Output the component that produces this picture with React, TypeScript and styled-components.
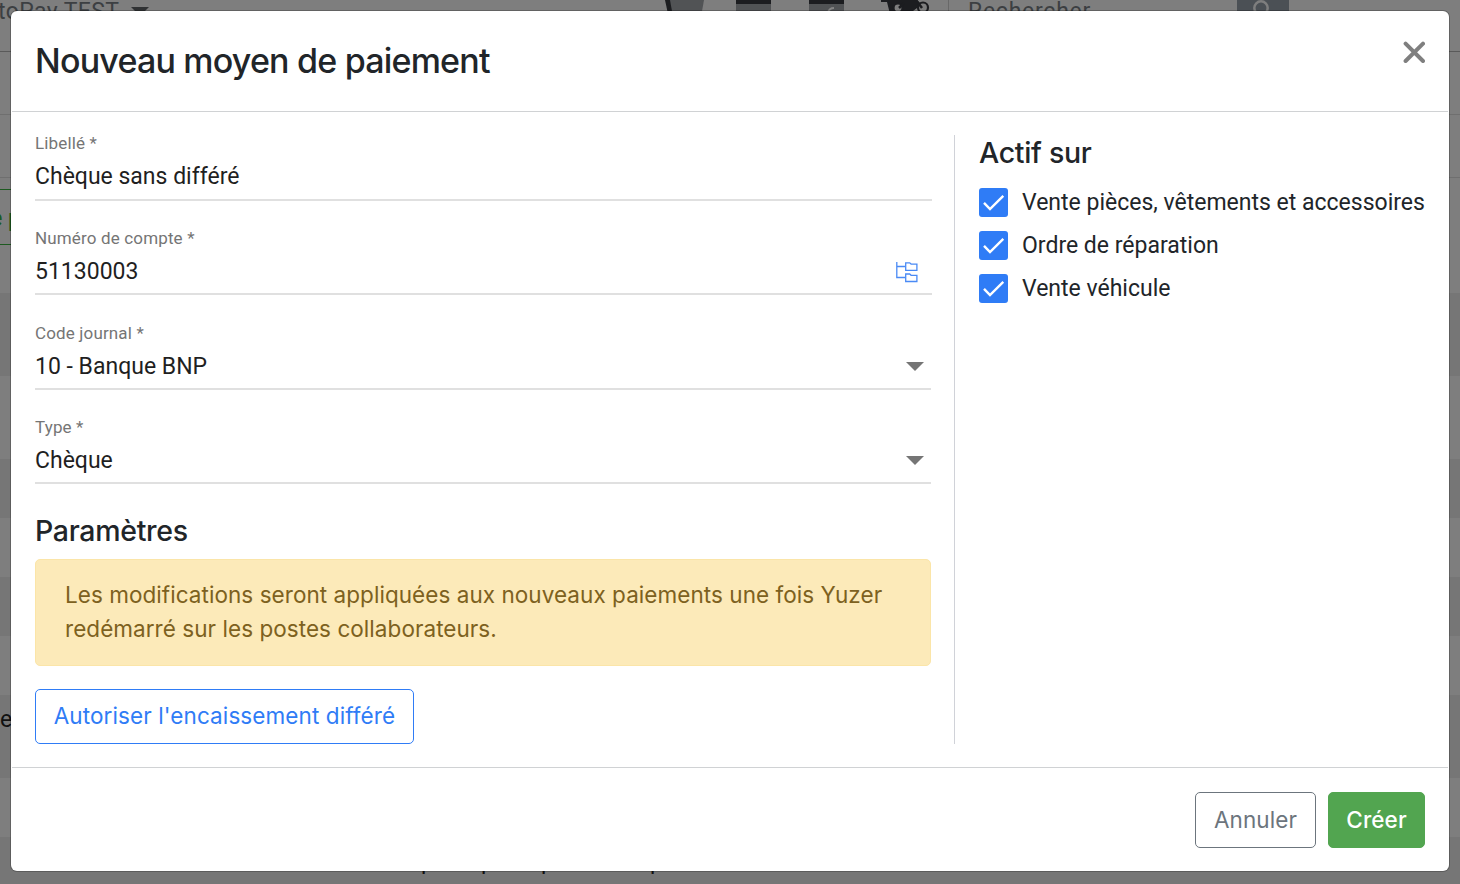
import React from "react";
import styled, { createGlobalStyle } from "styled-components";

const GlobalStyle = createGlobalStyle`
  *, *::before, *::after { box-sizing: border-box; }
  body { margin: 0; overflow: hidden; background: #767676; font-family: Roboto, sans-serif; color: #212529; }
  h2, h3, p { margin: 0; }
  button { font-family: inherit; background: none; margin: 0; cursor: pointer; }
`;

const Page = styled.div`
  position: relative;
  width: 1460px;
  height: 884px;
  overflow: hidden;
`;

/* Dimmed page behind the dialog */
const Backdrop = styled.div`
  display: flex;
  flex-direction: column;
  height: 884px;
  background: #7e7e7e;
`;
const TopBar = styled.div`
  display: flex;
  align-items: flex-start;
  flex: none;
  height: 52px;
  border-bottom: 1px solid #5a5a5a;
  box-shadow: 0 1px 3px rgba(0, 0, 0, 0.25);
  color: #3c3f42;
  font-size: 23px;
  line-height: 24px;
  white-space: nowrap;
`;
const Shop = styled.div`
  display: flex;
  width: 660px;
  margin-left: -2px;
  gap: 12px;
  letter-spacing: 0.4px;
`;
const Caret = styled.span<{ $top?: number; $color?: string }>`
  width: 0;
  height: 0;
  margin-top: ${(p) => p.$top ?? 0}px;
  margin-bottom: 0.6px;
  border: 9px solid transparent;
  border-top-color: ${(p) => p.$color ?? "#757575"};
  border-bottom-width: 0;
`;
const Tools = styled.svg`
  display: block;
  flex: none;
  width: 290px;
  height: 14px;
`;
const Search = styled.div`
  display: flex;
  width: 289px;
  padding-left: 19px;
  border-left: 1px solid #686868;
  height: 34px;
  letter-spacing: 0.75px;
  span { width: 269px; }
`;
const SearchButton = styled.div`
  display: flex;
  justify-content: center;
  width: 52px;
  height: 34px;
  background: #4b5055;
`;
const Strip = styled.div<{ $height: number; $dark?: boolean; $line?: boolean }>`
  flex: none;
  height: ${(p) => p.$height}px;
  background: ${(p) => (p.$dark ? "#767676" : "#7e7e7e")};
  border-bottom: ${(p) => (p.$line ? "1px solid #6f6f6f" : "none")};
  color: #111;
  font-size: 23px;
  line-height: 50px;
`;
const GreenTab = styled.div`
  width: 60px;
  height: 56px;
  margin-top: 11px;
  border: 1px solid #1d5a20;
  border-left: 0;
  color: #1d5a20;
  font-size: 23px;
  font-weight: 500;
  line-height: 57px;
  text-indent: -10px;
`;
const CutText = styled.div`
  display: grid;
  grid-template-columns: 60px 60px 109px 20px;
  padding: 3px 0 0 421px;
  color: #111;
  font-size: 23px;
  line-height: 44px;
`;

/* Dialog */
const Dialog = styled.section`
  position: absolute;
  inset: 11px 11px 13px 11px;
  display: flex;
  flex-direction: column;
  background: #fff;
  border-radius: 6px;
  box-shadow: 0 0 0 1px rgba(0, 0, 0, 0.22);
`;
const Header = styled.header`
  display: flex;
  justify-content: space-between;
  height: 101px;
  margin: 0 1px;
  padding: 24px 23px;
  border-bottom: 1px solid #d0d2d4;
`;
const Title = styled.h2`
  font-family: Inter, sans-serif;
  font-size: 34px;
  font-weight: 550;
  line-height: 52px;
  letter-spacing: -0.8px;
  white-space: nowrap;
`;
const CloseButton = styled.button`
  width: 22px;
  height: 22px;
  margin-top: 6px;
  padding: 0;
  border: 0;
  svg { display: block; }
`;
const Body = styled.div`
  display: flex;
  height: 655px;
  padding: 23px 24px 0;
`;
const Form = styled.div`
  width: 920px;
  height: 609px;
  border-right: 1px solid #d0d2d8;
  padding-right: 23px;
`;
const Fields = styled.div`
  display: flex;
  flex-direction: column;
  gap: 28.4px;
  margin-top: -0.6px;
`;
const Field = styled.div<{ $wide?: boolean }>`
  height: 66.2px;
  width: ${(p) => (p.$wide ? 897 : 896)}px;
  border-bottom: 2px solid #e0e0e0;
`;
const Label = styled.div`
  height: 19px;
  color: #757575;
  font-size: 17px;
  line-height: 18px;
  letter-spacing: 0.15px;
`;
const Value = styled.div<{ $pad: number }>`
  display: flex;
  justify-content: space-between;
  align-items: center;
  height: 48px;
  padding-right: ${(p) => p.$pad}px;
  font-size: 23px;
  line-height: 48px;
  color: #1f1f1f;
  svg { margin-top: 1px; }
`;
const Section = styled.h3<{ $top?: number }>`
  margin-top: ${(p) => p.$top ?? 0}px;
  font-family: Inter, sans-serif;
  font-size: 28.5px;
  line-height: 36px;
  font-weight: 550;
  letter-spacing: -0.3px;
`;
const Alert = styled.p`
  height: 107px;
  margin-top: 10px;
  padding: 18px 29px;
  border: 1px solid #fbe5a8;
  border-radius: 5px;
  background: #fceab9;
  color: #7d6120;
  font-family: Inter, sans-serif;
  font-size: 22.5px;
  line-height: 34px;
  letter-spacing: 0.05px;
  white-space: nowrap;
`;
const Button = styled.button<{ $color: string; $width: number; $height: number; $solid?: boolean }>`
  width: ${(p) => p.$width}px;
  height: ${(p) => p.$height}px;
  padding: 0;
  border: 1px solid ${(p) => p.$color};
  border-radius: 5px;
  background: ${(p) => (p.$solid ? p.$color : "#fff")};
  color: ${(p) => (p.$solid ? "#fff" : p.$color)};
  font-family: Inter, sans-serif;
  font-size: 22.5px;
  font-weight: ${(p) => (p.$solid ? 450 : 400)};
  line-height: ${(p) => p.$height - 4}px;
  letter-spacing: 0.1px;
  white-space: nowrap;
`;
const AlertAction = styled.div`
  margin-top: 23px;
  button { padding-bottom: 2px; }
`;
const Side = styled.aside`
  padding-left: 24px;
`;
const Choices = styled.div`
  display: flex;
  flex-direction: column;
  gap: 14px;
  margin-top: 17px;
`;
const Choice = styled.label`
  display: flex;
  gap: 14px;
  height: 29px;
  font-size: 23px;
  line-height: 30px;
  white-space: nowrap;
`;
const Box = styled.span`
  width: 29px;
  height: 29px;
  border-radius: 3px;
  background: #2f7cf6;
  svg { display: block; }
`;
const Footer = styled.footer`
  display: flex;
  justify-content: flex-end;
  gap: 12px;
  height: 104px;
  margin: 0 1px;
  padding: 24px 23px;
  border-top: 1px solid #d0d2d4;
`;

const choices = ["Vente pièces, vêtements et accessoires", "Ordre de réparation", "Vente véhicule"];

const strips: { height: number; dark?: boolean; text?: string }[] = [
  { height: 48 },
  { height: 83, dark: true },
  { height: 83 },
  { height: 59, dark: true },
  { height: 59 },
  { height: 59, dark: true },
  { height: 59 },
  { height: 83, dark: true, text: "e" },
  { height: 59 },
];

function TreeIcon() {
  return (
    <svg width="22" height="21" viewBox="0 0 22 21" fill="none" stroke="#4a8af5" strokeWidth="1.3">
      <path d="M.8 0v15.5H9M.8 4.5H9" />
      <path d="M9.7 .8h4l1.400 1.300h5.800v6.200H9.700zM9.700 12h4l1.400 1.300h5.800v6.200H9.700z" />
    </svg>
  );
}

function ToolIcons() {
  return (
    <Tools viewBox="0 0 290 14">
      <path d="M8 0h38l-2.500 14H13z" fill="#515355" />
      <path d="M7 0h5l2.500 14H10z" fill="#1c1d20" />
      <path d="M78 0h35v14H78zM151 0h35v14h-35z" fill="#515355" />
      <path d="M78 0h35v4H78zM151 0h35v4h-35z" fill="#1c1d20" />
      <path d="M170 13q1-5 6-5" fill="none" stroke="#858585" strokeWidth="2" />
      <path d="M223 0h36l5 5-5 3-4 3h-12l-4 3h-7l-3-12h-6z" fill="#1c1d20" />
      <circle cx="240" cy="8" r="4.500" fill="#7e7e7e" stroke="#1c1d20" strokeWidth="2.200" />
      <circle cx="265" cy="7.500" r="5" fill="#7e7e7e" stroke="#1c1d20" strokeWidth="2.200" />
      <path d="M258 0l6 8M246 3l-5 5" stroke="#1c1d20" strokeWidth="2.500" />
    </Tools>
  );
}

export default function App() {
  return (
    <Page>
      <GlobalStyle />
      <Backdrop aria-hidden>
        <TopBar>
          <Shop>
            <span>toPay TEST</span>
            <Caret $top={7} $color="#303234" />
          </Shop>
          <ToolIcons />
          <Search>
            <span>Rechercher</span>
          </Search>
          <SearchButton>
            <svg width="20" height="20" viewBox="0 0 20 20" fill="none" stroke="#7e7e7e" strokeWidth="2.500">
              <circle cx="8" cy="8" r="6.700" />
              <path d="M13 13l6 6" />
            </svg>
          </SearchButton>
        </TopBar>
        <Strip $height={63} $line />
        <Strip $height={63} $line />
        <Strip $height={67}>
          <GreenTab>e p</GreenTab>
        </Strip>
        {strips.map((s, i) => (
          <Strip key={i} $height={s.height} $dark={s.dark}>{s.text}</Strip>
        ))}
        <Strip $height={47} $dark>
          <CutText>
            <span>p</span>
            <span>p</span>
            <span>p</span>
            <span>p</span>
          </CutText>
        </Strip>
      </Backdrop>

      <Dialog role="dialog">
        <Header>
          <Title>Nouveau moyen de paiement</Title>
          <CloseButton aria-label="Fermer">
            <svg width="22" height="22" viewBox="0 0 22 22" stroke="#7f7f7f" strokeWidth="4" strokeLinecap="round">
              <path d="M2.600 2.600l17.400 17.400M20 2.600L2.600 20" />
            </svg>
          </CloseButton>
        </Header>
        <Body>
          <Form>
            <Fields>
              <Field $wide>
                <Label>Libellé *</Label>
                <Value $pad={0}>Chèque sans différé</Value>
              </Field>
              <Field $wide>
                <Label>Numéro de compte *</Label>
                <Value $pad={14}>51130003<TreeIcon /></Value>
              </Field>
              <Field>
                <Label>Code journal *</Label>
                <Value $pad={7}>10 - Banque BNP<Caret /></Value>
              </Field>
              <Field>
                <Label>Type *</Label>
                <Value $pad={7}>Chèque<Caret /></Value>
              </Field>
            </Fields>
            <Section $top={29}>Paramètres</Section>
            <Alert>
              Les modifications seront appliquées aux nouveaux paiements une fois Yuzer
              <br />
              redémarré sur les postes collaborateurs.
            </Alert>
            <AlertAction>
              <Button $color="#2f7cf6" $width={379} $height={55}>Autoriser l'encaissement différé</Button>
            </AlertAction>
          </Form>
          <Side>
            <Section>Actif sur</Section>
            <Choices>
              {choices.map((c) => (
                <Choice key={c}>
                  <Box>
                    <svg width="29" height="29" viewBox="0 0 29 29" fill="none" stroke="#fff" strokeWidth="2.400">
                      <path d="M5 14.800l6 6.200L24.300 7.800" />
                    </svg>
                  </Box>
                  {c}
                </Choice>
              ))}
            </Choices>
          </Side>
        </Body>
        <Footer>
          <Button $color="#6c757d" $width={121} $height={56}>Annuler</Button>
          <Button $color="#52a550" $width={97} $height={56} $solid>Créer</Button>
        </Footer>
      </Dialog>
    </Page>
  );
}
